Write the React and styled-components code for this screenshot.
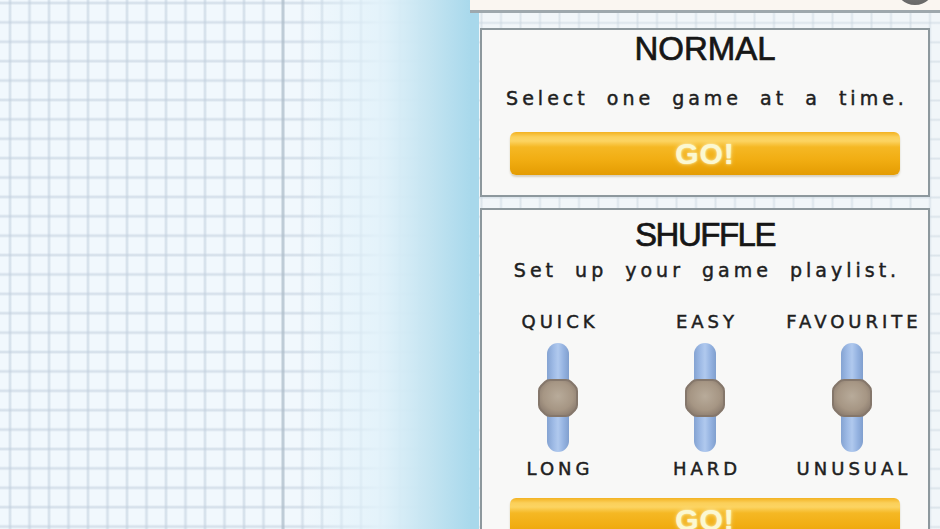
import styled, { createGlobalStyle } from "styled-components";

const GlobalStyle = createGlobalStyle`
  html, body {
    margin: 0;
    padding: 0;
    overflow: hidden;
  }
  body {
    font-family: "DejaVu Sans", "Liberation Sans", sans-serif;
    color: #1c1c1c;
  }
`;

const Screen = styled.div`
  display: flex;
  width: 940px;
  height: 529px;
  overflow: hidden;
`;

// graph paper that fades into the blue edge of the screen
const GridPaper = styled.div`
  width: 470px;
  flex-shrink: 0;
  background-color: #f1f8fd;
  background-image:
    linear-gradient(to right, rgba(241, 248, 253, 0) 300px, rgba(226, 242, 250, 0.9) 380px, #c4e4f1 430px, #a9d9ec 470px),
    linear-gradient(to right, transparent 281px, rgba(160, 176, 188, 0.45) 282px, rgba(160, 176, 188, 0.45) 284px, transparent 285px),
    linear-gradient(to right, transparent 0, rgba(196, 210, 224, 0.45) 1px, rgba(190, 204, 218, 0.6) 2px, rgba(196, 210, 224, 0.45) 3px, transparent 4px),
    linear-gradient(to bottom, transparent 0, rgba(196, 210, 224, 0.45) 1px, rgba(190, 204, 218, 0.6) 2px, rgba(196, 210, 224, 0.45) 3px, transparent 4px);
  background-size: 100% 100%, 100% 100%, 19.5px 100%, 100% 19.4px;
  background-position: 0 0, 0 0, 8px 0, 0 1px;
`;

const SidePanel = styled.div`
  flex: 1;
  display: flex;
  flex-direction: column;
  background-color: #f1f6f9;
  background-image:
    linear-gradient(to right, #a8d8eb 0 9px, transparent 9px),
    linear-gradient(to right, transparent 0, rgba(200, 212, 222, 0.5) 1px, rgba(200, 212, 222, 0.5) 2px, transparent 3px),
    linear-gradient(to bottom, transparent 0, rgba(200, 212, 222, 0.5) 1px, rgba(200, 212, 222, 0.5) 2px, transparent 3px);
  background-size: 100% 100%, 19.5px 100%, 100% 19.4px;
  background-position: 0 0, 10px 0, 0 2px;
`;

const TopBar = styled.div`
  height: 10px;
  flex-shrink: 0;
  display: flex;
  justify-content: flex-end;
  padding-right: 5px;
  overflow: hidden;
  background: #faf6f1;
  border-bottom: 3px solid #9ea8ad;
`;

const CornerButton = styled.div`
  width: 40px;
  height: 40px;
  margin-top: -35px;
  border-radius: 50%;
  background: radial-gradient(circle at 50% 35%, #8c8c8c, #5e5e5e);
`;

const Cards = styled.div`
  display: flex;
  flex-direction: column;
  gap: 11px;
  padding: 15px 10px 0 10px;
`;

const Card = styled.section`
  display: flex;
  flex-direction: column;
  align-items: center;
  padding: ${p => p.$top}px 0 20px;
  background: #f8f8f7;
  border: 2px solid #8d989d;
`;

const Title = styled.h2`
  margin: 0;
  font-family: "Liberation Sans", sans-serif;
  font-weight: normal;
  font-size: 33px;
  line-height: 33px;
  letter-spacing: ${p => p.$tight ? "-1.5px" : "0"};
  color: #161616;
  -webkit-text-stroke: 0.7px #161616;
`;

const Blurb = styled.p`
  margin: ${p => p.$gap}px 0 0;
  padding-left: 4px;
  font-size: 19px;
  line-height: 19px;
  letter-spacing: 4px;
  word-spacing: 8px;
  color: #202020;
  -webkit-text-stroke: 0.45px #202020;
`;

const GoButton = styled.button`
  width: 390px;
  height: 43px;
  margin-top: ${p => p.$gap}px;
  flex-shrink: 0;
  border: none;
  border-radius: 6px;
  background: linear-gradient(
    to bottom,
    #f3b221 0,
    #fbd05a 5px,
    #fcd462 9px,
    #f5b824 15px,
    #f1ad12 28px,
    #e49c02 100%
  );
  box-shadow: 0 2px 2px rgba(120, 90, 20, 0.25);
  font-family: "Liberation Sans", sans-serif;
  font-weight: bold;
  font-size: 30px;
  letter-spacing: 1px;
  color: #fbf8d2;
  text-shadow: 0 0 2px rgba(255, 252, 215, 0.9), 0 0 5px rgba(255, 245, 190, 0.6);
  cursor: pointer;
`;

const Sliders = styled.div`
  display: grid;
  grid-template-columns: repeat(3, 147px);
  justify-content: center;
  margin-top: 33px;
`;

const SliderColumn = styled.div`
  display: flex;
  flex-direction: column;
  align-items: center;
`;

const SliderLabel = styled.span`
  padding-left: 4px;
  font-size: 18px;
  line-height: 18px;
  letter-spacing: 4px;
  color: #202020;
  -webkit-text-stroke: 0.45px #202020;
  white-space: nowrap;
`;

const Track = styled.div`
  width: 22px;
  height: 109px;
  margin: ${p => p.$gap}px 0 8px;
  display: flex;
  align-items: center;
  justify-content: center;
  border-radius: 11px;
  background: linear-gradient(
    to right,
    #84a3d2 0,
    #9fbbe6 30%,
    #b0c9ee 50%,
    #95b3e1 75%,
    #809fce 100%
  );
`;

const Knob = styled.svg`
  flex-shrink: 0;
`;

function SliderKnob() {
  return (
    <Knob width="42" height="40" viewBox="0 0 42 40">
      <defs>
        <radialGradient id="knobFill" cx="50%" cy="45%" r="60%">
          <stop offset="0" stopColor="#b8ab9a" />
          <stop offset="0.65" stopColor="#a69684" />
          <stop offset="1" stopColor="#8a7b6e" />
        </radialGradient>
      </defs>
      <path
        d="M13 2 H29 Q32 2 34 4 L38 8 Q40 10 40 13 V27 Q40 30 38 32 L34 36 Q32 38 29 38 H13 Q10 38 8 36 L4 32 Q2 30 2 27 V13 Q2 10 4 8 L8 4 Q10 2 13 2 Z"
        fill="url(#knobFill)"
        stroke="#85776b"
        strokeWidth="2"
      />
    </Knob>
  );
}

const sliders = [
  { top: "QUICK", bottom: "LONG" },
  { top: "EASY", bottom: "HARD" },
  { top: "FAVOURITE", bottom: "UNUSUAL" },
];

export default function App() {
  return (
    <>
      <GlobalStyle />
      <Screen>
        <GridPaper />
        <SidePanel>
          <TopBar>
            <CornerButton />
          </TopBar>
          <Cards>
            <Card $top={2}>
              <Title>NORMAL</Title>
              <Blurb $gap={24}>Select one game at a time.</Blurb>
              <GoButton $gap={24}>GO!</GoButton>
            </Card>
            <Card $top={8}>
              <Title $tight>SHUFFLE</Title>
              <Blurb $gap={10}>Set up your game playlist.</Blurb>
              <Sliders>
                {sliders.map(s => (
                  <SliderColumn key={s.top}>
                    <SliderLabel>{s.top}</SliderLabel>
                    <Track $gap={12}>
                      <SliderKnob />
                    </Track>
                    <SliderLabel>{s.bottom}</SliderLabel>
                  </SliderColumn>
                ))}
              </Sliders>
              <GoButton $gap={20}>GO!</GoButton>
            </Card>
          </Cards>
        </SidePanel>
      </Screen>
    </>
  );
}
